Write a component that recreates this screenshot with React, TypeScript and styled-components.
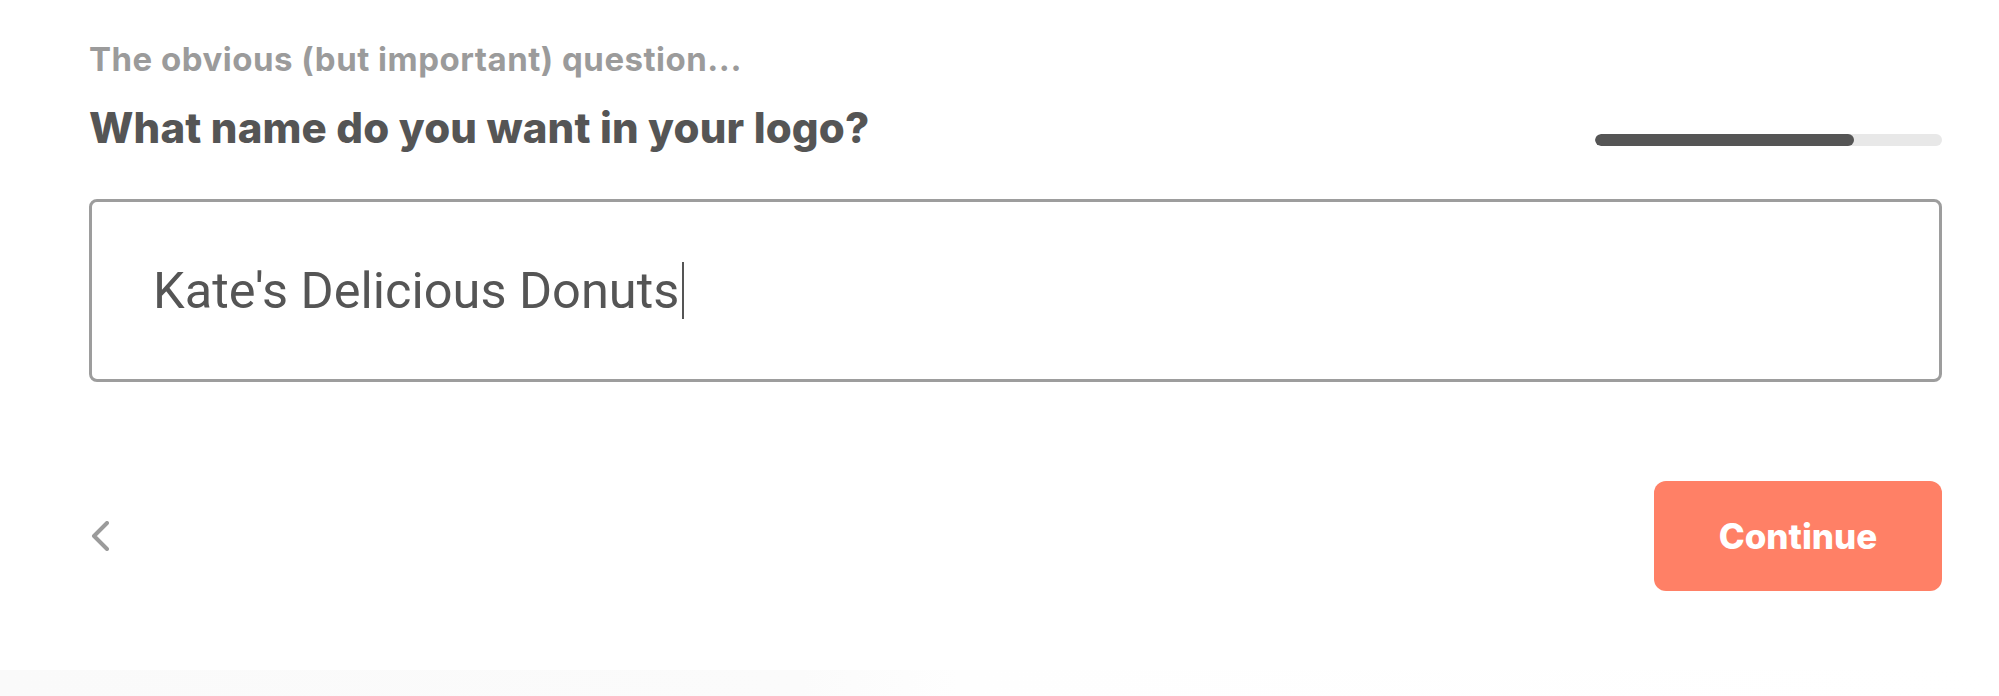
import React from 'react';
import styled, { createGlobalStyle } from 'styled-components';

const GlobalStyle = createGlobalStyle`
  html, body {
    margin: 0;
    padding: 0;
    background: #ffffff;
  }
  body {
    font-family: 'Inter', 'Noto Sans', sans-serif;
  }
`;

// whole step of the wizard
const Page = styled.div`
  height: 696px;
  box-sizing: border-box;
  padding: 40px 57px 0 89px;
  display: flex;
  flex-direction: column;
  overflow: hidden;
`;

const HeaderRow = styled.div`
  display: flex;
  justify-content: space-between;
  align-items: flex-end;
`;

const Heading = styled.div`
  display: flex;
  flex-direction: column;
`;

const Eyebrow = styled.div`
  font-size: 33px;
  line-height: 39px;
  font-weight: 700;
  color: #9b9b9b;
  letter-spacing: 0.5px;
`;

const Question = styled.h1`
  margin: 24px 0 0;
  font-size: 42px;
  line-height: 50px;
  font-weight: 800;
  color: #555555;
  letter-spacing: 0.15px;
`;

const Track = styled.div`
  width: 347px;
  height: 12px;
  margin-bottom: 7px;
  border-radius: 6px;
  background: #e8e8e8;
  overflow: hidden;
`;

const Fill = styled.div`
  height: 100%;
  border-radius: 6px;
  background: #555555;
`;

const Field = styled.div`
  margin-top: 46px;
  height: 183px;
  box-sizing: border-box;
  border: 3px solid #9d9d9d;
  border-radius: 8px;
  padding-left: 61px;
  display: flex;
  align-items: center;
  font-family: 'Roboto', 'Liberation Sans', sans-serif;
  font-size: 50.5px;
  line-height: 59px;
  color: #555555;
`;

const Caret = styled.span`
  width: 2px;
  height: 57px;
  margin-left: 3px;
  background: #555555;
`;

const Actions = styled.div`
  margin-top: 99px;
  display: flex;
  justify-content: space-between;
  align-items: center;
`;

const BackButton = styled.button`
  border: none;
  background: transparent;
  padding: 0;
  width: 20px;
  height: 30px;
  cursor: pointer;
  display: flex;
`;

const ContinueButton = styled.button`
  width: 288px;
  height: 110px;
  border: none;
  border-radius: 12px;
  background: #ff8066;
  color: #ffffff;
  font-family: 'Inter', 'Noto Sans', sans-serif;
  font-size: 35px;
  font-weight: 800;
  cursor: pointer;
`;

const Shade = styled.div`
  margin: auto -57px 0 -89px;
  height: 26px;
  background: linear-gradient(to right, #fafafa 0%, #fbfbfb 40%, #fefefe 48%, #ffffff 100%);
`;

const progress = 74.6;

export default function App() {
  return (
    <>
      <GlobalStyle />
      <Page>
        <HeaderRow>
          <Heading>
            <Eyebrow>The obvious (but important) question...</Eyebrow>
            <Question>What name do you want in your logo?</Question>
          </Heading>
          <Track>
            <Fill style={{ width: `${progress}%` }} />
          </Track>
        </HeaderRow>

        <Field>
          Kate's Delicious Donuts
          <Caret />
        </Field>

        <Actions>
          <BackButton aria-label="Back">
            <svg width="20" height="30" viewBox="0 0 20 30">
              <polyline
                points="18,2 5,15 18,28"
                fill="none"
                stroke="#9b9b9b"
                strokeWidth="4"
                strokeLinecap="round"
                strokeLinejoin="round"
              />
            </svg>
          </BackButton>
          <ContinueButton>Continue</ContinueButton>
        </Actions>

        <Shade />
      </Page>
    </>
  );
}
